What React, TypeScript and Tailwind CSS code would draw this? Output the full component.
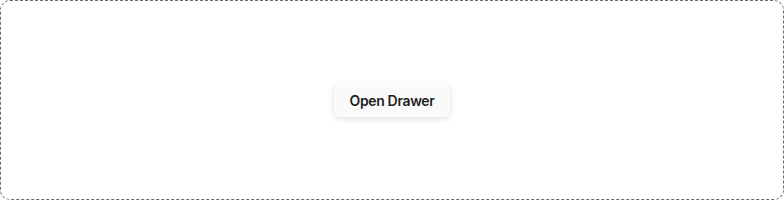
import React from "react";

export default function App() {
  return (
    <div className="w-[784px] h-[200px] bg-white" style={{ fontFamily: "Inter, sans-serif" }}>
      <div className="w-full h-full border border-dashed border-[#6b6b6b] rounded-[10px] flex items-center justify-center">
        <button className="h-[34px] px-4 rounded-md bg-[#fafafa] text-[14px] font-semibold tracking-[-0.35px] text-[#1f1f1f] shadow-[0_2px_6px_rgba(0,0,0,0.12)]">
          Open Drawer
        </button>
      </div>
    </div>
  );
}
